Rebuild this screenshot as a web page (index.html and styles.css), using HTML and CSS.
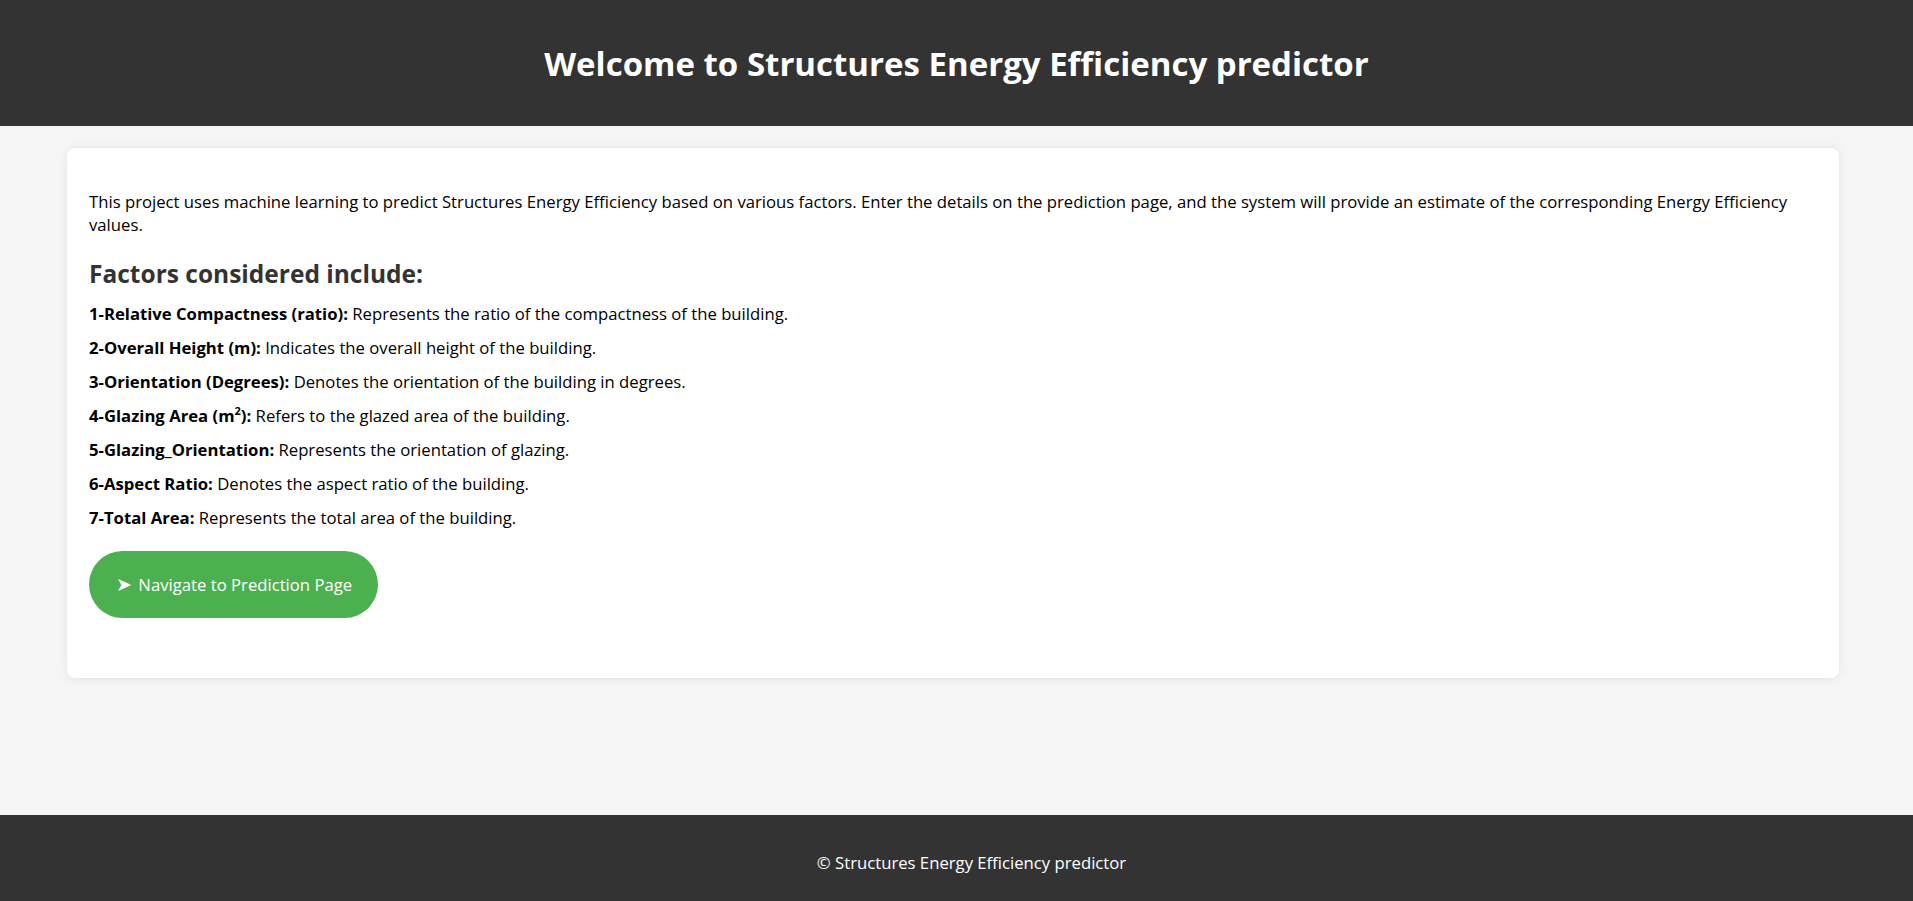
FILE: index.html
```html
<!DOCTYPE html>
<html lang="en">
<head>
<meta charset="utf-8">
<title>Structures Energy Efficiency predictor</title>
<link rel="stylesheet" href="styles.css">
</head>
<body>
<header class="site-header">
  <h1 class="site-title">Welcome to Structures Energy Efficiency predictor</h1>
</header>
<main class="main">
  <section class="card">
    <p class="intro">This project uses machine learning to predict Structures Energy Efficiency based on various factors. Enter the details on the prediction page, and the system will provide an estimate of the corresponding Energy Efficiency values.</p>
    <h2 class="factors-title">Factors considered include:</h2>
    <p class="factor"><strong>1-Relative Compactness (ratio):</strong> Represents the ratio of the compactness of the building.</p>
    <p class="factor"><strong>2-Overall Height (m):</strong> Indicates the overall height of the building.</p>
    <p class="factor"><strong>3-Orientation (Degrees):</strong> Denotes the orientation of the building in degrees.</p>
    <p class="factor"><strong>4-Glazing Area (m<sup>2</sup>):</strong> Refers to the glazed area of the building.</p>
    <p class="factor"><strong>5-Glazing_Orientation:</strong> Represents the orientation of glazing.</p>
    <p class="factor"><strong>6-Aspect Ratio:</strong> Denotes the aspect ratio of the building.</p>
    <p class="factor"><strong>7-Total Area:</strong> Represents the total area of the building.</p>
    <div class="actions">
      <a class="nav-button" href="#"><span class="nav-arrow">➤</span> Navigate to Prediction Page</a>
    </div>
  </section>
</main>
<footer class="site-footer">
  <p class="footer-text">© Structures Energy Efficiency predictor</p>
</footer>
</body>
</html>
```

FILE: styles.css
```css
* { box-sizing: border-box; }

html, body {
  margin: 0;
  padding: 0;
}

body {
  font-family: "Open Sans", "Noto Sans", sans-serif;
  font-size: 16.7px;
  color: #000;
  background: #f5f5f5;
  min-height: 100vh;
  display: flex;
  flex-direction: column;
}

.site-header {
  background: #333;
  height: 126px;
  display: flex;
  align-items: center;
  justify-content: center;
}

.site-title {
  margin: 0;
  color: #fff;
  font-size: 33px;
  font-weight: 700;
}

.main {
  flex: 1;
  padding: 22px 74px 0 67px;
}

.card {
  background: #fff;
  border-radius: 8px;
  box-shadow: 0 0 10px rgba(0, 0, 0, 0.08);
  padding: 22px;
  display: flow-root;
}

.intro {
  margin: 20px 0 16px;
  line-height: 23px;
}

.factors-title {
  margin: 22px 0 12px;
  font-size: 24.5px;
  line-height: 32px;
  color: #333;
  font-weight: 700;
}

.factor {
  margin: 10px 0;
  line-height: 24px;
}

.factor strong { font-weight: 700; }

.factor sup {
  font-size: 11px;
  line-height: 0;
}

.actions {
  margin: 21px 0 38px;
}

.nav-button {
  display: inline-block;
  background: #4caf50;
  color: #fff;
  text-decoration: none;
  border-radius: 34px;
  padding: 22px 26px 22px 27px;
  line-height: 23px;
}

.nav-arrow {
  display: inline-block;
  font-size: 19px;
  margin-right: 2px;
}

.site-footer {
  background: #333;
  height: 86px;
  display: flex;
  align-items: center;
  justify-content: center;
}

.footer-text {
  margin: 8px 0 0 30px;
  color: #fff;
}
```
